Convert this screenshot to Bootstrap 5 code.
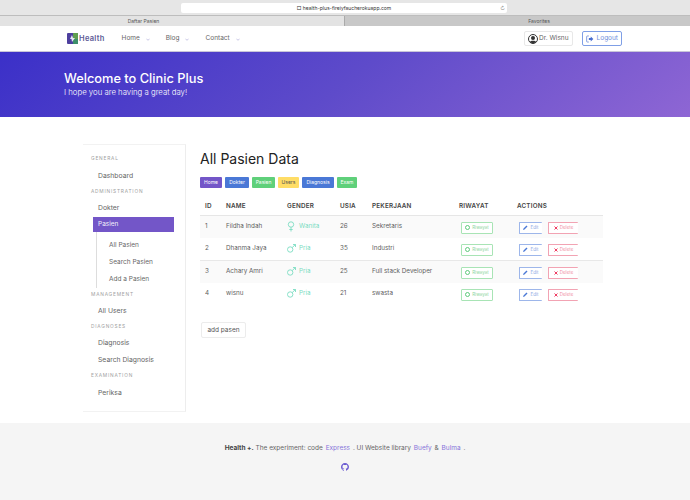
<!DOCTYPE html>
<html lang="en">
<head>
  <meta charset="utf-8">
  <title>Daftar Pasien</title>
  <link href="https://cdn.jsdelivr.net/npm/bootstrap@5.3.0/dist/css/bootstrap.min.css" rel="stylesheet">
  <style>
    body {
      font-family: Inter, "Liberation Sans", sans-serif;
      color: #4a4a4a;
      background: #fff;
      height: 500px;
      overflow: hidden;
    }

    /* browser chrome */
    .addr-bar { height: 15px; background: #e6e6e6; }
    .addr-field {
      width: 326px;
      height: 10px;
      margin-left: 181px;
      margin-top: 3px;
      background: #fff;
      border-radius: 2px;
      font-size: 5px;
      line-height: 10px;
      color: #333;
      position: relative;
    }
    .addr-reload { position: absolute; right: 2px; top: 0; color: #888; }
    .tab-bar { height: 11px; font-size: 5px; line-height: 10px; border-top: 1px solid #bdbdbd; color: #555; }
    .tab-on { width: 345px; padding-right: 57px; background: #e3e3e3; border-right: 1px solid #aaa; }
    .tab-off { width: 345px; padding-left: 43px; background: #c8c8c8; }

    /* top nav */
    .top-nav { height: 26px; padding: 0 68px 0 67px; border-bottom: 1px solid #c9c6d8; }
    .brand-name { font-size: 7.5px; font-weight: 600; color: #5c5a96; letter-spacing: .3px; margin-left: 1px; }
    .nav-item-lnk { font-size: 6.5px; color: #666; text-decoration: none; display: flex; align-items: center; gap: 6px; margin-right: 16px; }
    .nav-item-lnk svg { flex: none; }
    .nav-menu { margin-left: 17px; margin-top: 1px; }
    .user-btn, .logout-btn {
      height: 15px;
      font-size: 6.5px;
      border-radius: 2px;
      background: #fff;
      display: flex;
      align-items: center;
      white-space: nowrap;
      padding: 0 3px;
    }
    .user-btn { width: 49px; border: 1px solid #e8e8e8; color: #666; gap: 1px; }
    .logout-btn { width: 40px; border: 1px solid #7f9fe6; color: #6f8fdc; margin-left: 9px; gap: 3px; }

    /* hero */
    .hero-band {
      height: 65px;
      padding: 19px 0 0 64px;
      color: #fff;
      background: linear-gradient(141deg, #3b30c8 0%, #5e4bca 50%, #8e66d4 100%);
    }
    .hero-title { font-size: 12.8px; font-weight: 500; line-height: 16px; margin: 0; }
    .hero-sub { font-size: 7.8px; font-weight: 300; line-height: 10px; margin: 0; }

    /* page body */
    .page-body { height: 306px; padding: 27px 87px 0 83px; }
    .side-box {
      width: 103px;
      height: 268px;
      flex: none;
      border-top: 1px solid #f2f2f2;
      border-right: 1px solid #ededed;
      border-bottom: 1px solid #f2f2f2;
      padding-left: 10px;
      font-size: 6.8px;
    }
    .side-label { font-size: 4.8px; letter-spacing: .8px; color: #a0a0a0; height: 15.5px; line-height: 15.5px; text-transform: uppercase; margin-left: -2px; }
    .side-lnk { display: block; height: 17px; line-height: 17px; padding-left: 5px; color: #666; text-decoration: none; }
    .side-lnk.on { background: #7356c8; color: #f2f0fb; width: 81px; height: 15px; line-height: 15px; margin-top: 1px; margin-bottom: 5px; font-size: 6.5px; }
    .side-sub { border-left: 1px solid #ddd; margin-left: 3px; padding-left: 12px; margin-top: -5px; padding-top: 5px; margin-bottom: -1px; }
    .side-sub .side-lnk { padding-left: 0; font-size: 6.5px; }
    .side-top { margin-top: 6px; }
    .side-tight { height: 14.5px; line-height: 14.5px; }

    .main-col { width: 403px; margin-left: 14px; padding-top: 5px; }
    .page-title { font-size: 14px; font-weight: 400; color: #222; line-height: 20px; margin: 0 0 8px; }

    .crumb-btn {
      height: 11px;
      font-size: 5px;
      line-height: 11px;
      text-align: center;
      border-radius: 1px;
      color: #fff;
      text-decoration: none;
      display: block;
    }
    .crumb-btn.c-home { width: 22px; background: #7356c8; }
    .crumb-btn.c-dok { width: 24px; background: #4a78d6; }
    .crumb-btn.c-pas { width: 23px; background: #5fd07a; }
    .crumb-btn.c-usr { width: 21px; background: #ffdd66; color: #555; }
    .crumb-btn.c-dia { width: 32px; background: #4a78d6; }
    .crumb-btn.c-exa { width: 20px; background: #5fd07a; }
    .crumb-row { gap: 3px; margin-bottom: 11px; }

    .pasien-table { width: 403px; table-layout: fixed; margin: 0; font-size: 6.3px; }
    .pasien-table th { font-size: 6.3px; font-weight: 600; color: #444; height: 16px; padding: 0 0 0 5px; vertical-align: middle; border-bottom: 1px solid #e6e6e6; letter-spacing: .2px; }
    .pasien-table td { height: 22.5px; padding: 6px 0 0 5px; line-height: 9px; vertical-align: top; border: 0; color: #5f5f5f; background: transparent; box-shadow: none; }
    .pasien-table tbody tr:nth-child(odd) td { background: #fafafa; }
    .pasien-table tbody tr:nth-child(3) td { border-top: 1px solid #e8e8e8; }
    .pasien-table td.btn-cell { padding-left: 7px; }
    .gender-cell { color: #7adcc2; display: flex; align-items: center; gap: 3px; height: 9px; }
    .gender-cell svg { width: 9px; flex: none; }
    .act-btn {
      height: 12px;
      font-size: 4.5px;
      display: inline-flex;
      align-items: center;
      justify-content: center;
      gap: 2px;
      background: #fff;
      border-radius: 1px;
      padding: 0;
      vertical-align: top;
    }
    .act-riw { width: 32px; border: 1px solid #a8e4b5; color: #8fd6a2; }
    .act-edit { width: 23px; border: 1px solid #9db6ea; border-right: 0; color: #8ea8e4; }
    .act-del { width: 30px; border: 1px solid #f2a3b3; border-right: 0; color: #f08ea2; margin-left: 6px; }
    .add-btn {
      display: block;
      margin: 17px 0 0 1px;
      width: 45px;
      height: 16px;
      line-height: 14px;
      padding: 0;
      white-space: nowrap;
      font-size: 6.5px;
      text-align: center;
      color: #555;
      border: 1px solid #ececec;
      background: #fff;
      border-radius: 2px;
    }

    /* footer */
    .foot-band { height: 77px; background: #f5f5f5; font-size: 6.5px; color: #666; padding-top: 21px; text-align: center; }
    .foot-band a { color: #8674da; text-decoration: none; margin: 0 1px; }
    .foot-band b { color: #444; font-weight: 700; }
    .foot-icon { margin-top: 9px; line-height: 1; }
  </style>
</head>
<body>
  <div class="addr-bar d-flex">
    <div class="addr-field text-center">&#9633; health-plus-fireiyfaucherokuapp.com<span class="addr-reload">&#8635;</span></div>
  </div>
  <div class="tab-bar d-flex text-center">
    <div class="tab-on">Daftar Pasien</div>
    <div class="tab-off">Favorites</div>
  </div>

  <nav class="top-nav d-flex align-items-center">
    <svg width="11" height="11" viewBox="0 0 11 11">
      <rect width="11" height="11" rx="1" fill="#4d3f9e"/>
      <rect x="6" width="5" height="6" fill="#5f9e4f"/>
      <rect x="6" y="6" width="5" height="5" fill="#3d8f6a"/>
      <path d="M5 2 L6 5 L8 5 L5 9 L4.500 6 L3 6 Z" fill="#e6e6f5"/>
    </svg>
    <span class="brand-name">Health</span>
    <div class="nav-menu d-flex">
      <a class="nav-item-lnk" href="#">Home <svg width="4" height="3" viewBox="0 0 5 3"><path d="M.5.5 2.500 2.500 4.500.5" fill="none" stroke="#a9a6d8" stroke-width=".8"/></svg></a>
      <a class="nav-item-lnk" href="#">Blog <svg width="4" height="3" viewBox="0 0 5 3"><path d="M.5.5 2.500 2.500 4.500.5" fill="none" stroke="#a9a6d8" stroke-width=".8"/></svg></a>
      <a class="nav-item-lnk" href="#">Contact <svg width="4" height="3" viewBox="0 0 5 3"><path d="M.5.5 2.500 2.500 4.500.5" fill="none" stroke="#a9a6d8" stroke-width=".8"/></svg></a>
    </div>
    <div class="ms-auto d-flex">
      <div class="user-btn">
        <svg width="10" height="10" viewBox="0 0 10 10"><circle cx="5" cy="5" r="4.500" fill="none" stroke="#333"/><circle cx="5" cy="4" r="2" fill="#333"/><path d="M1.800 8.200 C2.500 6.300 7.500 6.300 8.200 8.200 L5 9.500 Z" fill="#333"/></svg>
        Dr. Wisnu
      </div>
      <div class="logout-btn">
        <svg width="8" height="8" viewBox="0 0 8 8"><path d="M3 .8H1.500Q.7.8.7 1.600V6.400Q.7 7.200 1.500 7.200H3" fill="none" stroke="#5d7fd8" stroke-width=".8"/><path d="M3 3H5V1.300L7.800 4 5 6.700V5H3Z" fill="#4a6fd0"/></svg>
        Logout
      </div>
    </div>
  </nav>

  <section class="hero-band">
    <h1 class="hero-title">Welcome to Clinic Plus</h1>
    <p class="hero-sub">I hope you are having a great day!</p>
  </section>

  <div class="page-body d-flex">
    <aside class="side-box">
      <div class="side-label side-top">General</div>
      <a class="side-lnk" href="#">Dashboard</a>
      <div class="side-label">Administration</div>
      <a class="side-lnk" href="#">Dokter</a>
      <a class="side-lnk on" href="#">Pasien</a>
      <div class="side-sub">
        <a class="side-lnk" href="#">All Pasien</a>
        <a class="side-lnk" href="#">Search Pasien</a>
        <a class="side-lnk" href="#">Add a Pasien</a>
      </div>
      <div class="side-label side-tight">Management</div>
      <a class="side-lnk" href="#">All Users</a>
      <div class="side-label">Diagnoses</div>
      <a class="side-lnk" href="#">Diagnosis</a>
      <a class="side-lnk" href="#">Search Diagnosis</a>
      <div class="side-label">Examination</div>
      <a class="side-lnk" href="#">Periksa</a>
    </aside>

    <main class="main-col">
      <h2 class="page-title">All Pasien Data</h2>
      <div class="crumb-row d-flex">
        <a class="crumb-btn c-home" href="#">Home</a>
        <a class="crumb-btn c-dok" href="#">Dokter</a>
        <a class="crumb-btn c-pas" href="#">Pasien</a>
        <a class="crumb-btn c-usr" href="#">Users</a>
        <a class="crumb-btn c-dia" href="#">Diagnosis</a>
        <a class="crumb-btn c-exa" href="#">Exam</a>
      </div>

      <table class="table pasien-table">
        <colgroup>
          <col style="width:21px"><col style="width:61px"><col style="width:53px"><col style="width:32px"><col style="width:87px"><col style="width:58px"><col>
        </colgroup>
        <thead>
          <tr><th>ID</th><th>NAME</th><th>GENDER</th><th>USIA</th><th>PEKERJAAN</th><th>RIWAYAT</th><th>ACTIONS</th></tr>
        </thead>
        <tbody id="rows"></tbody>
      </table>

      <button class="add-btn" type="button">add pasen</button>
    </main>
  </div>

  <footer class="foot-band">
    <div><b>Health +.</b> The experiment: code <a href="#">Express</a> . UI Website library <a href="#">Buefy</a> &amp; <a href="#">Bulma</a> .</div>
    <div class="foot-icon">
      <svg width="8" height="8" viewBox="0 0 16 16"><path fill="#6a5ad0" d="M8 0C3.580 0 0 3.580 0 8c0 3.540 2.290 6.530 5.470 7.590.4.070.55-.17.55-.38v-1.340c-2.230.48-2.700-1.070-2.700-1.070-.36-.92-.89-1.170-.89-1.170-.73-.5.050-.49.050-.49.800.060 1.230.82 1.230.82.720 1.220 1.870.87 2.330.66.070-.52.280-.87.510-1.070-1.780-.2-3.640-.89-3.640-3.950 0-.87.310-1.590.820-2.150-.080-.2-.360-1.020.080-2.120 0 0 .670-.210 2.200.82a7.700 7.700 0 0 1 4 0c1.530-1.040 2.200-.82 2.200-.82.440 1.100.160 1.920.080 2.120.510.560.820 1.270.820 2.150 0 3.070-1.870 3.750-3.650 3.950.290.250.540.730.540 1.480v2.190c0 .21.150.460.550.380A8 8 0 0 0 16 8c0-4.420-3.580-8-8-8z"/></svg>
    </div>
  </footer>

  <script>
    const pasien = [
      [1, "Fildha Indah", "Wanita", 26, "Sekretaris"],
      [2, "Dhanma Jaya", "Pria", 35, "Industri"],
      [3, "Achary Amri", "Pria", 25, "Full stack Developer"],
      [4, "wisnu", "Pria", 21, "swasta"]
    ];
    const female = '<svg height="11" viewBox="0 0 9 11"><circle cx="4" cy="3.500" r="2.700" fill="none" stroke="#7adcc2" stroke-width=".9"/><path d="M4 6.200V10.500M2.300 8.500H5.700" stroke="#7adcc2" stroke-width=".9"/></svg>';
    const male = '<svg height="9" viewBox="0 0 9 9"><circle cx="3.200" cy="5.500" r="2.700" fill="none" stroke="#7adcc2" stroke-width=".9"/><path d="M5.200 3.500 8.500 .5M6 .5H8.500V3" fill="none" stroke="#7adcc2" stroke-width=".9"/></svg>';
    const riw = '<svg width="5" height="5" viewBox="0 0 5 5"><circle cx="2.500" cy="2.500" r="2" fill="none" stroke="#5fc97c"/></svg>';
    const pen = '<svg width="5" height="5" viewBox="0 0 5 5"><path d="M0 5 .5 3.500 3.500.5 4.500 1.500 1.500 4.500Z" fill="#4a78d6"/></svg>';
    const del = '<svg width="4" height="4" viewBox="0 0 4 4"><path d="M.5.5 3.500 3.500M3.500.5 .5 3.500" stroke="#ee3f64"/></svg>';

    document.getElementById("rows").innerHTML = pasien.map(p => `
      <tr>
        <td>${p[0]}</td>
        <td>${p[1]}</td>
        <td><div class="gender-cell">${p[2] === "Wanita" ? female : male} ${p[2]}</div></td>
        <td>${p[3]}</td>
        <td>${p[4]}</td>
        <td class="btn-cell"><button class="act-btn act-riw" type="button">${riw} Riwayat</button></td>
        <td class="btn-cell"><button class="act-btn act-edit" type="button">${pen} Edit</button><button class="act-btn act-del" type="button">${del} Delete</button></td>
      </tr>`).join("");
  </script>
  <script src="https://cdn.jsdelivr.net/npm/bootstrap@5.3.0/dist/js/bootstrap.bundle.min.js"></script>
</body>
</html>
